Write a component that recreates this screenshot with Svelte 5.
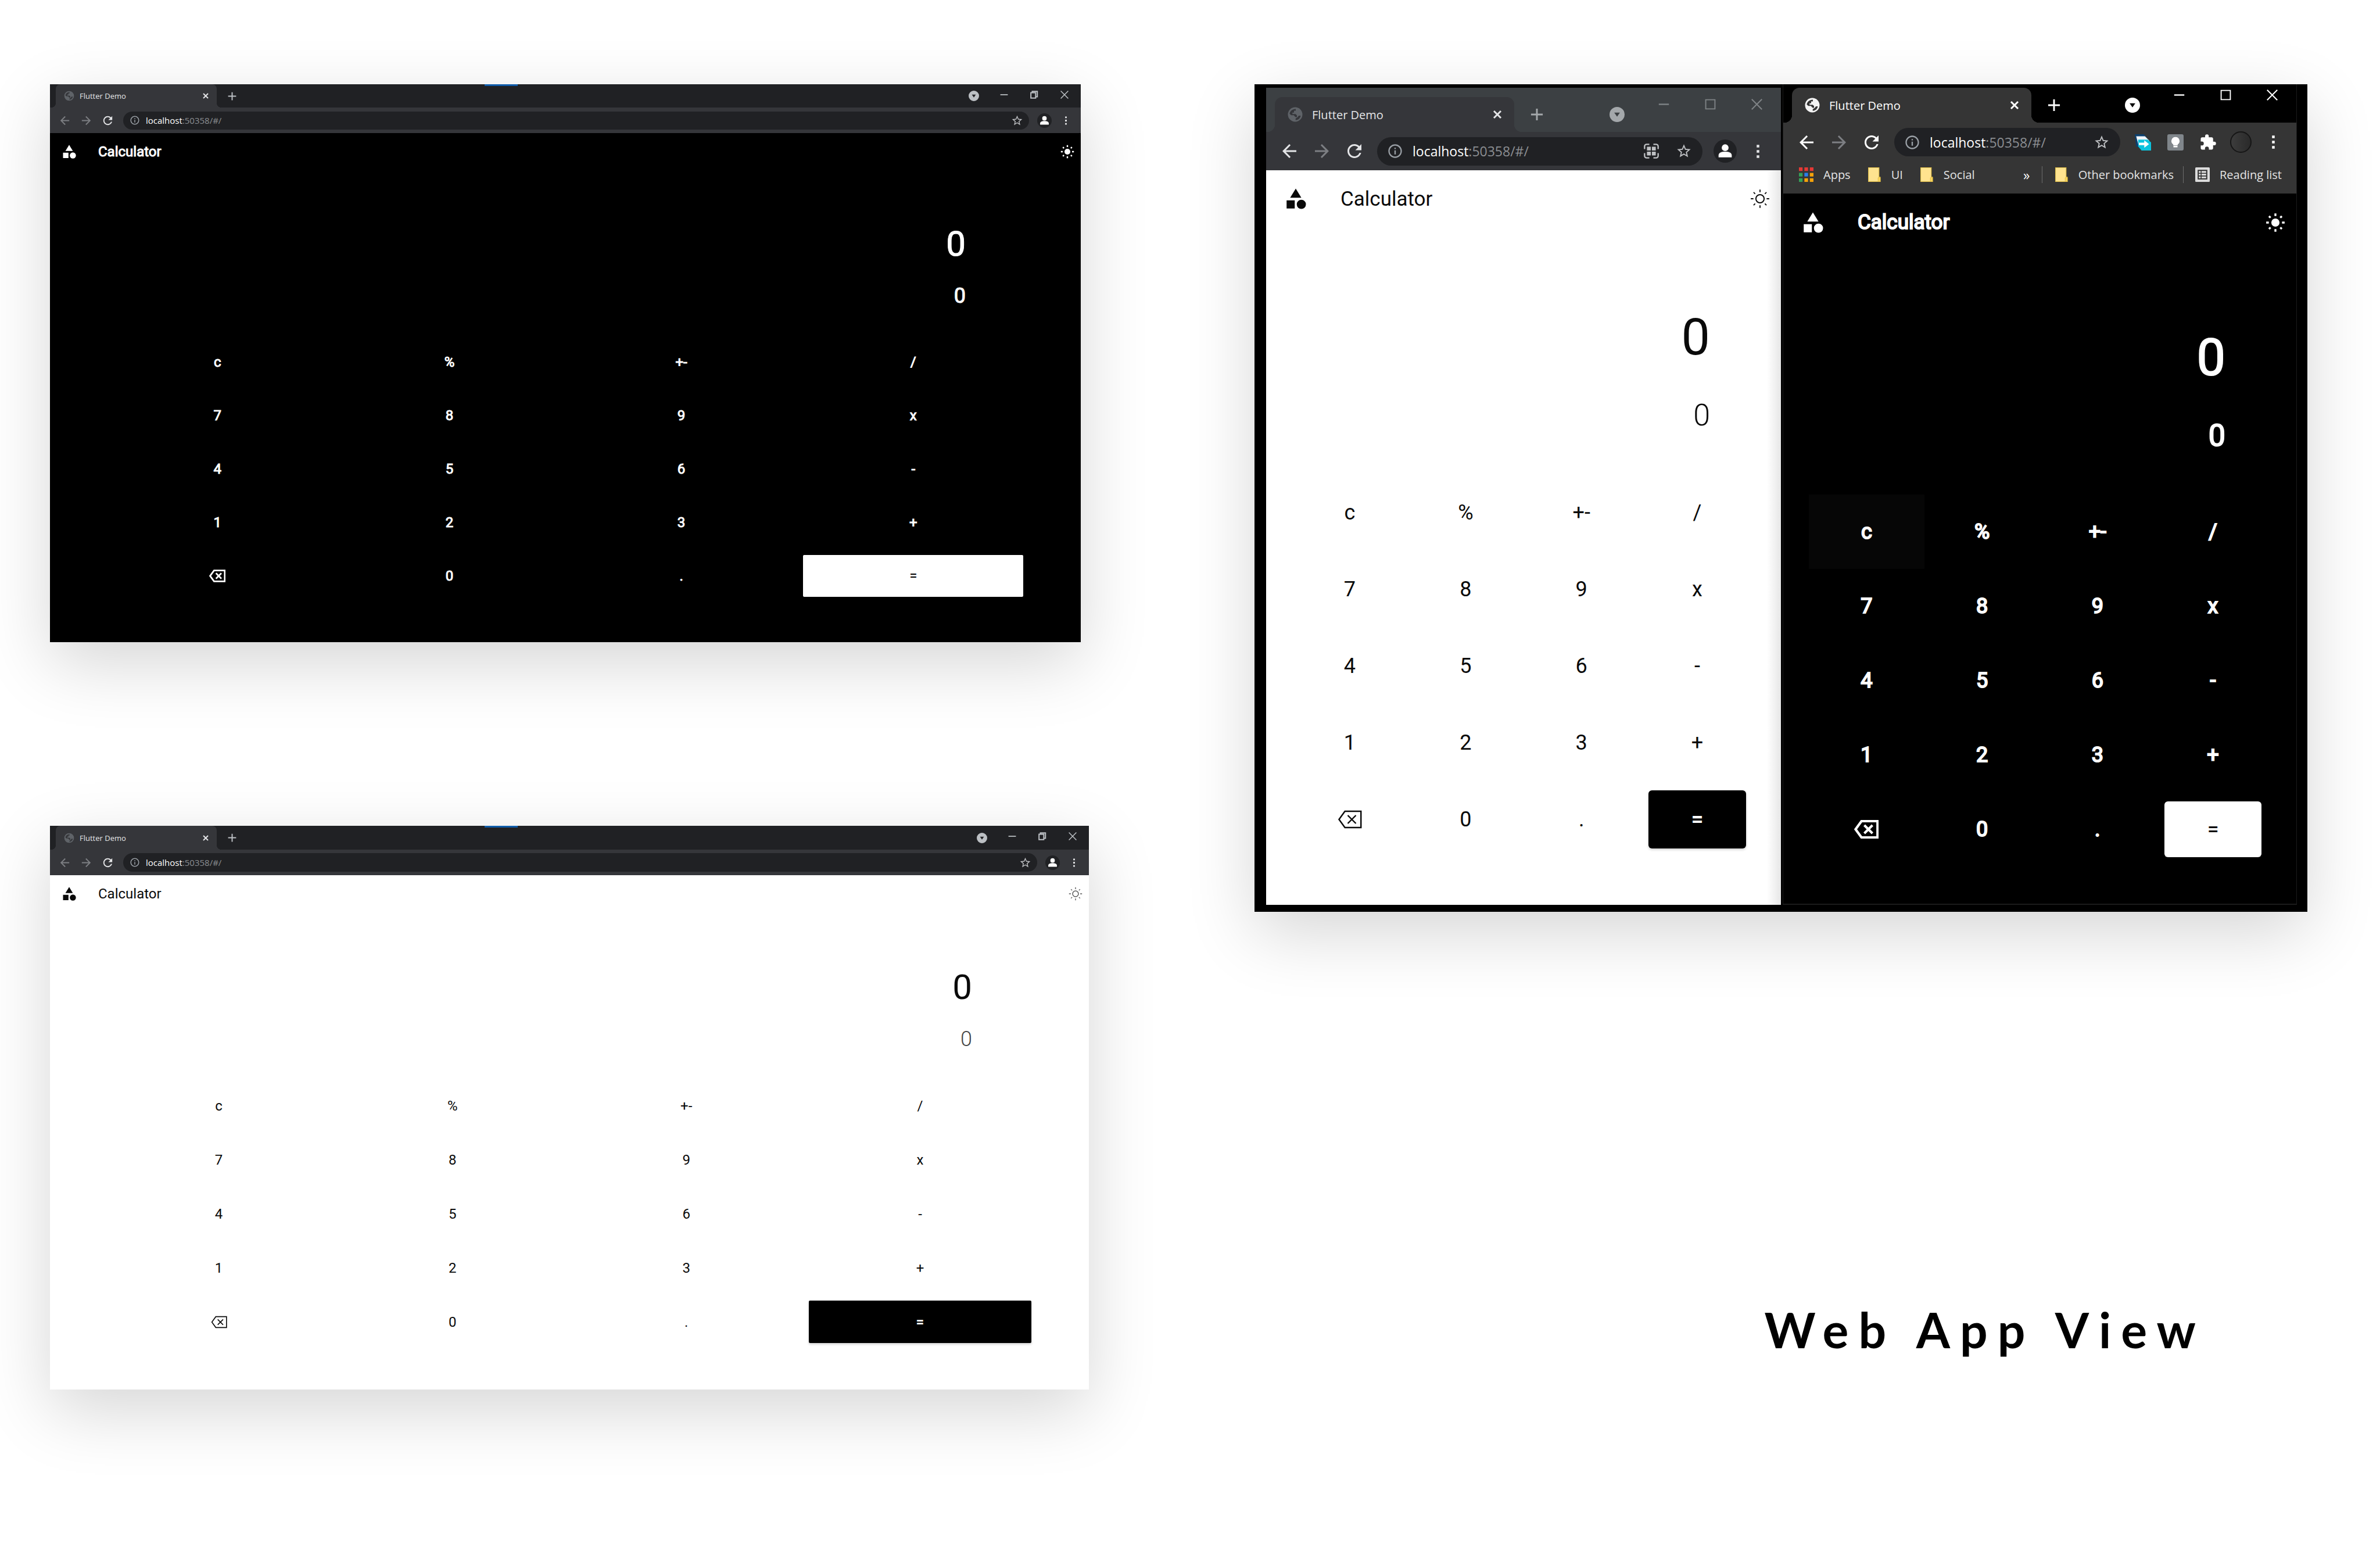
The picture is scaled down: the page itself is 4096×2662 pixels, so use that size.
<script>
  const keys = ['c', '%', '+-', '/', '7', '8', '9', 'x', '4', '5', '6', '-', '1', '2', '3', '+', 'back', '0', '.', '='];

  const wideDark = { look: 'wide dark first', restore: true, marker: true };
  const wideLight = { look: 'wide light second', restore: true, marker: true };
  const paneLight = { look: 'pane light inactive', install: true };
  const paneDark = { look: 'pane dark themed', extensions: true, bookmarks: true, pressed: 'c' };
</script>

{#snippet icon(name)}
  <svg class="icon {name}" viewBox="0 0 24 24" aria-hidden="true">
    {#if name === 'globe'}
      <circle cx="12" cy="12" r="10" fill="currentColor" />
      <path class="land" d="M4.3 11C4.8 7.3 8 4.4 12.8 4.3V6.8H10.4V9.4H8.2V11.4H12.6L14.4 13.2V15.6H12.4L10 13H6.5z M19.6 13.5C19 17 16.5 19.4 12.6 19.7V17.6L15.2 15.8 17 13.6z" />
    {:else if name === 'close'}
      <path class="line" stroke-width="4" d="M4 4l16 16M20 4L4 20" />
    {:else if name === 'plus'}
      <path class="line" stroke-width="3.2" d="M12 1v22M1 12h22" />
    {:else if name === 'down'}
      <path fill="currentColor" fill-rule="evenodd" d="M12 0a12 12 0 1 0 0 24a12 12 0 0 0 0-24zM7.5 9h9L12 15.5z" />
    {:else if name === 'min'}
      <path class="line" stroke-width="3" d="M1 12h22" />
    {:else if name === 'max'}
      <path class="line" stroke-width="2.4" d="M2 2h20v20H2z" />
    {:else if name === 'restore'}
      <path class="line" stroke-width="3.4" d="M2 6h14v16H2zM6 5V2h15v16h-4" />
    {:else if name === 'exit'}
      <path class="line" stroke-width="2.6" d="M1 1l22 22M23 1L1 23" />
    {:else if name === 'prev'}
      <path fill="currentColor" d="M20 11H7.83l5.59-5.59L12 4l-8 8 8 8 1.41-1.41L7.83 13H20v-2z" />
    {:else if name === 'next'}
      <path fill="currentColor" d="M12 4l-1.41 1.41L16.17 11H4v2h12.17l-5.58 5.59L12 20l8-8z" />
    {:else if name === 'reload'}
      <path fill="currentColor" d="M17.65 6.35C16.2 4.9 14.21 4 12 4c-4.42 0-7.99 3.58-7.99 8s3.57 8 7.99 8c3.73 0 6.84-2.55 7.73-6h-2.08c-.82 2.33-3.04 4-5.65 4-3.31 0-6-2.69-6-6s2.69-6 6-6c1.66 0 3.14.69 4.22 1.78L13 11h7V4l-2.35 2.35z" />
    {:else if name === 'info'}
      <path fill="currentColor" d="M11 7h2v2h-2zm0 4h2v6h-2zm1-9C6.48 2 2 6.48 2 12s4.48 10 10 10 10-4.48 10-10S17.52 2 12 2zm0 18c-4.41 0-8-3.59-8-8s3.59-8 8-8 8 3.59 8 8-3.59 8-8 8z" />
    {:else if name === 'star'}
      <path fill="currentColor" d="M22 9.24l-7.19-.62L12 2 9.19 8.63 2 9.24l5.46 4.73L5.82 21 12 17.27 18.18 21l-1.63-7.03L22 9.24zM12 15.4l-3.76 2.27 1-4.28-3.32-2.88 4.38-.38L12 6.1l1.71 4.04 4.38.38-3.32 2.88 1 4.28L12 15.4z" />
    {:else if name === 'install'}
      <path class="line" stroke-width="2" d="M9 2H5a3 3 0 0 0-3 3v4M15 2h4a3 3 0 0 1 3 3v4M9 22H5a3 3 0 0 1-3-3v-4M15 22h4a3 3 0 0 0 3-3v-4" />
      <path fill="currentColor" d="M5.5 5.5h5.7v5.7H5.5zM12.8 5.5h5.7v5.7h-5.7zM5.5 12.8h5.7v5.7H5.5zM12.8 12.8h5.7v5.7h-5.7z" />
    {:else if name === 'person'}
      <circle cx="12" cy="7.6" r="4.4" fill="currentColor" />
      <path fill="currentColor" d="M3.5 20v-2.5C3.5 14.2 7 12.8 12 12.8s8.5 1.4 8.5 4.7V20z" />
    {:else if name === 'dots'}
      <path fill="currentColor" d="M10 2h4v4h-4zM10 10h4v4h-4zM10 18h4v4h-4z" />
    {:else if name === 'shapes'}
      <path fill="currentColor" d="M12 2l-5.5 9h11zM3 13.5h8v8H3z" />
      <circle cx="17.5" cy="17.5" r="4.5" fill="currentColor" />
    {:else if name === 'sun'}
      <circle class="core" cx="12" cy="12" r="5" />
      <path class="rays" d="M12 .8v3.2M12 20v3.2M.8 12h3.2M20 12h3.2M4.2 4.2l1.9 1.9M17.9 17.9l1.9 1.9M4.2 19.8l1.9-1.9M17.9 6.1l1.9-1.9" />
    {:else if name === 'erase'}
      <path class="line" d="M7.2 4H23v16H7.2L1.4 12zM10 8l8 8M18 8l-8 8" />
    {:else if name === 'transfer'}
      <path fill="#0b3f6e" d="M0 0h13l5 5-10 15-6-2z" />
      <path fill="#f1f5f8" d="M2 3h13l6 6v5L6 18z" />
      <path fill="#0cc3de" d="M5 8h14l5 4v12H10l-5-6z" />
      <path fill="#fff" d="M6 12.5h8V9l7 5.5-7 5.5v-4H6z" />
    {:else if name === 'bulb'}
      <rect width="24" height="24" rx="2.5" fill="#80868b" />
      <path fill="#fff" d="M12 4a6 6 0 0 0-3.3 11v1.2h6.6V15A6 6 0 0 0 12 4zM9 17h6v2.2H9z" />
    {:else if name === 'puzzle'}
      <path fill="currentColor" d="M20.5 11H19V7c0-1.1-.9-2-2-2h-4V3.5a2.5 2.5 0 0 0-5 0V5H4c-1.1 0-2 .9-2 2v3.8h1.5a2.7 2.7 0 0 1 0 5.4H2V20c0 1.1.9 2 2 2h3.8v-1.5a2.7 2.7 0 0 1 5.4 0V22H17c1.1 0 2-.9 2-2v-4h1.5a2.5 2.5 0 0 0 0-5z" />
    {:else if name === 'apps'}
      <path fill="#e53935" d="M0 0h6v6H0zM9 0h6v6H9zM18 0h6v6h-6z" />
      <path fill="#34a058" d="M0 9h6v6H0zM0 18h6v6H0z" />
      <path fill="#2a7de9" d="M9 9h6v6H9z" />
      <path fill="#f5a20a" d="M18 9h6v6h-6zM9 18h6v6H9zM18 18h6v6h-6z" />
    {:else if name === 'folder'}
      <path fill="#ffe38f" stroke="#e0bd48" stroke-width="1" d="M2.5 .5H20V16h2v7.5H2.5z" />
      <path fill="#ffd75e" stroke="#e0bd48" stroke-width="1" d="M18.5 23.5V17.5l2-1.5 1.5 1v6.5z" />
    {:else if name === 'list'}
      <rect width="24" height="24" rx="1.5" fill="#dcdcdc" />
      <rect x="4" y="4" width="16" height="16" fill="#353535" />
      <path fill="#dcdcdc" d="M6 6h3v3H6zM10.5 6H18v3h-7.5zM6 10.5h3v3H6zM10.5 10.5H18v3h-7.5zM6 15h3v3H6zM10.5 15H18v3h-7.5z" />
    {/if}
  </svg>
{/snippet}

{#snippet browser(win)}
  <article class="browser {win.look}">
    <header class="strip">
      <div class="tab">
        <span class="favicon">{@render icon('globe')}</span>
        <span class="tab-title">Flutter Demo</span>
        <button class="tab-close" aria-label="Close tab">{@render icon('close')}</button>
      </div>
      <button class="new-tab" aria-label="New tab">{@render icon('plus')}</button>
      {#if win.marker}<span class="marker"></span>{/if}
      <div class="controls">
        <button class="search-tabs" aria-label="Search tabs">{@render icon('down')}</button>
        <button aria-label="Minimize">{@render icon('min')}</button>
        <button aria-label="Resize">{@render icon(win.restore ? 'restore' : 'max')}</button>
        <button aria-label="Close window">{@render icon('exit')}</button>
      </div>
    </header>

    <div class="tools">
      <nav class="toolbar" aria-label="Browser toolbar">
        <button class="slot back" aria-label="Back">{@render icon('prev')}</button>
        <button class="slot muted" aria-label="Forward">{@render icon('next')}</button>
        <button class="slot" aria-label="Reload">{@render icon('reload')}</button>
        <div class="address">
          <span class="info-slot">{@render icon('info')}</span>
          <span class="url">localhost<span class="port">:50358/#/</span></span>
          {#if win.install}
            <button class="slot" aria-label="Install app">{@render icon('install')}</button>
          {/if}
          <button class="slot" aria-label="Bookmark this page">{@render icon('star')}</button>
        </div>
        {#if win.extensions}
          <button class="slot" aria-label="Transfer">{@render icon('transfer')}</button>
          <button class="slot" aria-label="Hints">{@render icon('bulb')}</button>
          <button class="slot" aria-label="Extensions">{@render icon('puzzle')}</button>
          <button class="slot" aria-label="Profile"><span class="photo"></span></button>
        {:else}
          <button class="slot" aria-label="Profile"><span class="avatar">{@render icon('person')}</span></button>
        {/if}
        <button class="slot" aria-label="Menu">{@render icon('dots')}</button>
      </nav>
      {#if win.bookmarks}
        <nav class="bookmarks" aria-label="Bookmarks">
          <a href="#apps">{@render icon('apps')}Apps</a>
          <a href="#ui">{@render icon('folder')}UI</a>
          <a href="#social">{@render icon('folder')}Social</a>
          <button class="more" aria-label="More bookmarks">»</button>
          <a class="ruled" href="#other">{@render icon('folder')}Other bookmarks</a>
          <a class="ruled" href="#reading">{@render icon('list')}Reading list</a>
        </nav>
      {/if}
    </div>

    <section class="app">
      <div class="appbar">
        <span class="logo">{@render icon('shapes')}</span>
        <h2>Calculator</h2>
        <button class="theme" aria-label="Toggle theme">{@render icon('sun')}</button>
      </div>
      <div class="display">
        <output class="entry">0</output>
        <output class="result">0</output>
      </div>
      <div class="keypad">
        {#each keys as key}
          <button class="key" class:equals={key === '='} class:pressed={key === win.pressed} aria-label={key === 'back' ? 'Backspace' : key}>
            {#if key === 'back'}{@render icon('erase')}{:else}{key}{/if}
          </button>
        {/each}
      </div>
    </section>
  </article>
{/snippet}

<main>
  <div class="column">
    {@render browser(wideDark)}
    {@render browser(wideLight)}
  </div>
  <div class="column">
    <div class="desktop">
      {@render browser(paneLight)}
      {@render browser(paneDark)}
    </div>
    <h1>Web App View</h1>
  </div>
</main>

<style>
  :global(body) {
    margin: 0;
    background: #fff;
  }

  main {
    box-sizing: border-box;
    min-height: 100vh;
    display: grid;
    grid-template-columns: 1788fr 1812fr;
    gap: 285px;
    padding: 145px 125px 145px 86px;
    overflow: hidden;
  }

  .column {
    display: flex;
    flex-direction: column;
    min-width: 0;
  }

  button {
    display: flex;
    align-items: center;
    justify-content: center;
    padding: 0;
    border: 0;
    background: none;
    color: inherit;
    font: inherit;
  }

  .icon {
    display: block;
    flex: none;
    width: var(--glyph);
    height: var(--glyph);
  }

  .line,
  .rays {
    fill: none;
    stroke: currentColor;
  }

  /* Browser windows: two scales */
  .wide {
    --glyph: 23px;
    --slot: 37px;
    --edge: 7px;
    --radius: 8px;
    --tab-top: 0px;
    --tab-height: 40px;
    --tab-left: 10px;
    --tab-width: 277px;
    --fav: 20px;
    --fav-pad: 13px;
    --fav-gap: 8px;
    --cross: 12px;
    --plus: 15px;
    --plus-slot: 52px;
    --ctl: 52px;
    --ctl-height: 35px;
    --ctl-icon: 14px;
    --down: 18px;
    --toolbar: 44px;
    --pill: 31px;
    --tab-text: 13px;
    --url-text: 15px;
    --info: 18px;
    --avatar: 25px;
    --appbar: 64px;
    --logo: 28px;
    --logo-left: 19px;
    --logo-gap: 36px;
    --sun: 24px;
    --sun-right: 11px;
    --title: 24px;
    --entry: 60px;
    --entry-line: 72px;
    --result: 36px;
    --result-line: 44px;
    --display-gap: 31px;
    --display-right: 198px;
    --display-bottom: 46px;
    --display: 284px;
    --key: 24px;
    --row: 92px;
    --inset: 10px;
    --erase: 28px;
    --corner: 2px;
    --foot: 68px;
    --bold: 1px;
  }

  .pane {
    --glyph: 36px;
    --slot: 56px;
    --edge: 12px;
    --radius: 13px;
    --tab-top: 16px;
    --tab-height: 60px;
    --tab-left: 15px;
    --tab-width: 412px;
    --fav: 30px;
    --fav-pad: 20px;
    --fav-gap: 14px;
    --cross: 18px;
    --plus: 22px;
    --plus-slot: 78px;
    --ctl: 80px;
    --ctl-height: 56px;
    --ctl-icon: 19px;
    --down: 26px;
    --toolbar: 66px;
    --pill: 49px;
    --tab-text: 20px;
    --url-text: 23px;
    --info: 28px;
    --avatar: 40px;
    --appbar: 98px;
    --logo: 42px;
    --logo-left: 30px;
    --logo-gap: 56px;
    --sun: 34px;
    --sun-right: 19px;
    --title: 35px;
    --entry: 88px;
    --entry-line: 106px;
    --result: 52px;
    --result-line: 62px;
    --display-gap: 51px;
    --display-right: 122px;
    --display-bottom: 70px;
    --display: 425px;
    --key: 36px;
    --row: 132px;
    --inset: 16px;
    --erase: 42px;
    --corner: 6px;
    --foot: 77px;
    --bold: 2px;
  }

  .dark {
    --page: #000;
    --ink: #fff;
  }

  .light {
    --page: #fff;
    --ink: #0a0a0a;
  }

  .browser {
    --frame: #202124;
    --bar: #35363a;
    --field: #202124;
    --chrome: #e4e5e7;
    --soft: #bcc0c4;
    --globe: #5f6368;
    display: flex;
    flex-direction: column;
    min-width: 0;
    background: var(--page);
    color: var(--ink);
    font-family: Roboto, "Liberation Sans", sans-serif;
  }

  .wide,
  .desktop {
    box-shadow: 0 36px 110px rgba(0, 0, 0, 0.165);
  }

  .first {
    margin-right: 14px;
  }

  .second {
    --tab-height: 41px;
    --pill: 32px;
    --row: 93px;
    --display: 286px;
    --display-right: 201px;
    --foot: 70px;
    margin-top: 316px;
  }

  .inactive {
    --frame: #3c4043;
    --soft: #a4a8ab;
    margin-top: 6px;
  }

  .themed {
    --frame: #000;
    --bar: #353535;
    --chrome: #fff;
    --soft: #fff;
    --globe: #f4f4f4;
    --tab-top: 6px;
    --ctl-height: 36px;
    --toolbar: 67px;
    --appbar: 99px;
    --display: 419px;
    --row: 128px;
    --foot: 64px;
  }

  /* Tab strip */
  .strip {
    display: flex;
    align-items: flex-start;
    background: var(--frame);
    color: var(--soft);
  }

  .tab {
    position: relative;
    box-sizing: border-box;
    display: flex;
    align-items: center;
    width: var(--tab-width);
    height: var(--tab-height);
    margin: var(--tab-top) 0 0 var(--tab-left);
    padding: 0 var(--fav-pad);
    border-radius: var(--radius) var(--radius) 0 0;
    background: var(--bar);
    color: var(--chrome);
    font-family: "Open Sans", "Noto Sans", sans-serif;
    font-size: var(--tab-text);
  }

  .tab::before,
  .tab::after {
    content: '';
    position: absolute;
    bottom: 0;
    width: var(--radius);
    height: var(--radius);
  }

  .tab::before {
    right: 100%;
    background: radial-gradient(circle at 0 0, transparent var(--radius), var(--bar) var(--radius));
  }

  .tab::after {
    left: 100%;
    background: radial-gradient(circle at 100% 0, transparent var(--radius), var(--bar) var(--radius));
  }

  .favicon {
    --glyph: var(--fav);
    color: var(--globe);
    margin-right: var(--fav-gap);
  }

  .land {
    fill: var(--bar);
  }

  .tab-title {
    flex: 1;
    white-space: nowrap;
  }

  .tab-close {
    --glyph: var(--cross);
  }

  .new-tab {
    --glyph: var(--plus);
    width: var(--plus-slot);
    height: var(--tab-height);
    margin-top: var(--tab-top);
  }

  .marker {
    width: 57px;
    height: 3px;
    margin-left: 409px;
    background: #0f5cab;
  }

  .controls {
    display: flex;
    margin: 0 2px 0 auto;
  }

  .controls button {
    --glyph: var(--ctl-icon);
    width: var(--ctl);
    height: var(--ctl-height);
  }

  .controls .search-tabs {
    --glyph: var(--down);
    height: var(--tab-height);
    margin-top: var(--tab-top);
  }

  .inactive .controls button:not(.search-tabs) {
    color: #7f8386;
  }

  /* Toolbar */
  .tools {
    background: var(--bar);
    color: var(--chrome);
    font-family: "Open Sans", "Noto Sans", sans-serif;
  }

  .toolbar {
    display: flex;
    align-items: center;
    height: var(--toolbar);
    padding: 0 var(--edge);
  }

  .slot {
    width: var(--slot);
    flex: none;
  }

  .muted,
  .wide .back {
    color: #7d7f83;
  }

  .address {
    display: flex;
    align-items: center;
    flex: 1;
    min-width: 0;
    height: var(--pill);
    margin: 0 8px;
    border-radius: var(--pill);
    background: var(--field);
    font-size: var(--url-text);
  }

  .pane .address {
    margin: 0 11px;
  }

  .wide .address .slot {
    margin-right: 2px;
    --glyph: 21px;
  }

  .pane .address .slot {
    --glyph: 28px;
  }

  .pane .address .slot:last-child {
    margin-right: 4px;
  }

  .address .slot {
    color: #bfc1c4;
  }

  .info-slot {
    --glyph: var(--info);
    display: flex;
    justify-content: center;
    width: 39px;
    color: #9aa0a6;
  }

  .pane .info-slot {
    width: 61px;
  }

  .url {
    flex: 1;
    color: #fff;
    white-space: nowrap;
  }

  .url .port {
    color: #8b8e92;
  }

  .avatar {
    --glyph: 21px;
    display: flex;
    align-items: center;
    justify-content: center;
    width: var(--avatar);
    height: var(--avatar);
    border-radius: 50%;
    background: var(--field);
    color: #fff;
  }

  .pane .avatar {
    --glyph: 32px;
  }

  .wide .dots {
    --glyph: 17px;
  }

  .pane .dots {
    --glyph: 27px;
  }

  .transfer,
  .bulb {
    --glyph: 28px;
  }

  .puzzle {
    --glyph: 30px;
  }

  .photo {
    width: 33px;
    height: 33px;
    border: 2px solid #161616;
    border-radius: 50%;
    background: linear-gradient(to right, #3c3c3c, #2a2a2a);
  }

  .bookmarks {
    --glyph: 25px;
    display: flex;
    align-items: center;
    height: 45px;
    padding: 0 25px 10px 27px;
    font-size: 20px;
    white-space: nowrap;
  }

  .bookmarks a {
    display: flex;
    align-items: center;
    gap: 17px;
    margin-right: 28px;
    color: #e4e4e4;
    text-decoration: none;
  }

  .bookmarks .more {
    width: 24px;
    margin: 0 14px 0 auto;
    font-size: 23px;
  }

  .bookmarks .ruled {
    height: 29px;
    margin-right: 16px;
    padding-left: 20px;
    border-left: 1px solid #6c6c6c;
  }

  .bookmarks a:last-child {
    margin-right: 0;
  }

  /* Calculator */
  .app {
    flex: 1;
    padding-bottom: var(--foot);
  }

  .inactive .app {
    background: linear-gradient(to left, #e6e6e6, #fff 24px);
  }

  .appbar {
    display: flex;
    align-items: center;
    height: var(--appbar);
    padding: 0 var(--sun-right) 0 var(--logo-left);
  }

  .logo {
    --glyph: var(--logo);
    margin-right: var(--logo-gap);
  }

  h2 {
    flex: 1;
    margin: 0;
    font-size: var(--title);
    font-weight: 400;
  }

  .theme {
    --glyph: var(--sun);
  }

  .core {
    fill: var(--ink);
  }

  .rays {
    stroke-width: 2.4;
  }

  .light .core {
    fill: none;
    stroke: currentColor;
    stroke-width: 1.4;
  }

  .light .rays {
    stroke-width: 1.3;
  }

  .second .theme {
    color: #555;
  }

  .display {
    box-sizing: border-box;
    display: flex;
    flex-direction: column;
    justify-content: flex-end;
    gap: var(--display-gap);
    height: var(--display);
    padding: 0 var(--display-right) var(--display-bottom) 0;
    text-align: right;
  }

  .entry {
    font-size: var(--entry);
    line-height: var(--entry-line);
  }

  .result {
    font-size: var(--result);
    line-height: var(--result-line);
  }

  .dark h2,
  .dark .result,
  .dark .entry,
  .dark .key:not(.equals) {
    -webkit-text-stroke: var(--bold) currentColor;
  }

  .light .result {
    font-weight: 300;
  }

  .second .result {
    color: #444;
  }

  .keypad {
    display: grid;
    grid-template-columns: repeat(4, 1fr);
    grid-auto-rows: var(--row);
    margin: 0 5%;
  }

  .key {
    --glyph: var(--erase);
    font-size: var(--key);
  }

  .erase {
    stroke-width: 2.4;
  }

  .light .erase {
    stroke-width: 1.4;
  }

  .pressed {
    background: #060606;
  }

  .equals {
    margin: var(--inset);
    border-radius: var(--corner);
    background: var(--ink);
    color: var(--page);
  }

  .light .equals {
    background: #000;
    font-weight: 700;
    box-shadow: 0 2px 4px rgba(0, 0, 0, 0.2);
  }

  /* Side-by-side windows */
  .desktop {
    display: grid;
    grid-template-columns: 886fr 885fr;
    gap: 3px;
    padding: 0 18px 12px 20px;
    background: #000;
  }

  .themed {
    border: solid #1b1b1b;
    border-width: 0 1px 2px;
  }

  h1 {
    margin: 669px 175px 0 0;
    color: #000;
    font-family: Lato, "Open Sans", sans-serif;
    font-size: 84px;
    font-weight: 700;
    line-height: 100px;
    letter-spacing: 17px;
    text-align: right;
    white-space: nowrap;
  }
</style>
